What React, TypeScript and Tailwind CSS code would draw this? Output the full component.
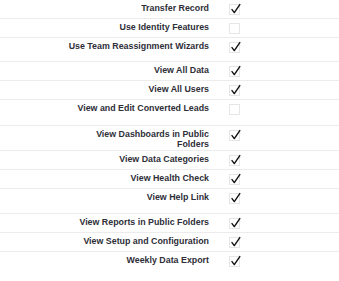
type Perm = { label: string; checked: boolean; h: string }

const perms: Perm[] = [
  { label: 'Transfer Record', checked: true, h: 'h-[19px]' },
  { label: 'Use Identity Features', checked: false, h: 'h-[19px]' },
  { label: 'Use Team Reassignment Wizards', checked: true, h: 'h-[24px]' },
  { label: 'View All Data', checked: true, h: 'h-[19px]' },
  { label: 'View All Users', checked: true, h: 'h-[19px]' },
  { label: 'View and Edit Converted Leads', checked: false, h: 'h-[26px]' },
  { label: 'View Dashboards in Public Folders', checked: true, h: 'h-[25px]' },
  { label: 'View Data Categories', checked: true, h: 'h-[19px]' },
  { label: 'View Health Check', checked: true, h: 'h-[19px]' },
  { label: 'View Help Link', checked: true, h: 'h-[25px]' },
  { label: 'View Reports in Public Folders', checked: true, h: 'h-[19px]' },
  { label: 'View Setup and Configuration', checked: true, h: 'h-[19px]' },
  { label: 'Weekly Data Export', checked: true, h: 'h-[19px]' },
]

function Box({ checked }: { checked: boolean }) {
  return (
    <div className="relative h-[11px] w-[11px] border border-[#e6e6e6] bg-white">
      {checked && (
        <svg
          viewBox="0 0 12 12"
          className="absolute -top-[2px] left-0 h-[12px] w-[12px]"
        >
          <path
            d="M2 6.6 L4.3 9.6 L9.8 1.6"
            fill="none"
            stroke="#111"
            strokeWidth="1.4"
            strokeLinecap="round"
            strokeLinejoin="round"
          />
        </svg>
      )}
    </div>
  )
}

// Read-only permission list: bold label on the left, checkbox image on the right.
export default function App() {
  return (
    <div className="min-h-[281px] w-[339px] bg-white font-['Liberation_Sans',Arial,sans-serif]">
      {perms.map((p, i) => (
        <div
          key={p.label}
          className={`flex items-start ${p.h} ${
            i < perms.length - 1 ? 'border-b border-[#ececec]' : ''
          }`}
        >
          <div className="w-[209px] shrink-0 pl-[65px] pt-[3px] text-right text-[8.85px] font-bold leading-[10px] text-[#2e2e38]">
            {p.label}
          </div>
          <div className="pl-[20px] pt-[4px]">
            <Box checked={p.checked} />
          </div>
        </div>
      ))}
    </div>
  )
}
